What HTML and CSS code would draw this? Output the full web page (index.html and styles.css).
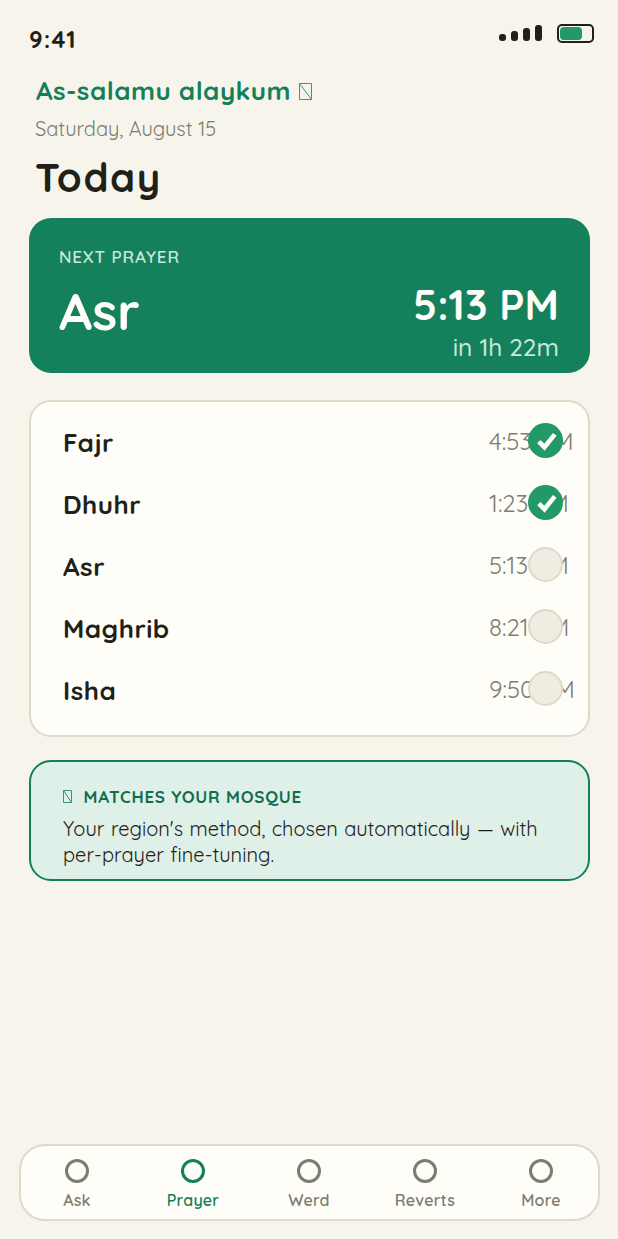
FILE: index.html
```html
<!DOCTYPE html>
<html lang="en">
<head>
    <meta charset="UTF-8">
    <meta name="viewport" content="width=device-width, initial-scale=1.0">
    <title>Today</title>
    <link rel="stylesheet" href="styles.css">
</head>
<body>
    <div class="page">
        <!-- Status bar -->
        <div class="status-bar">
            <span class="clock">9:41</span>
            <div class="status-icons">
                <div class="signal">
                    <span class="bar bar-1"></span>
                    <span class="bar bar-2"></span>
                    <span class="bar bar-3"></span>
                    <span class="bar bar-4"></span>
                </div>
                <div class="battery"><span class="battery-level"></span></div>
            </div>
        </div>

        <!-- Header -->
        <div class="header">
            <div class="greeting">As-salamu alaykum
                <svg class="tofu tofu-lg" viewBox="0 0 13 17"><path d="M.5.5h12v16H.5zM.5.5l12 16" /></svg>
            </div>
            <div class="date">Saturday, August 15</div>
            <h1 class="title">Today</h1>
        </div>

        <!-- Next prayer -->
        <div class="next-card">
            <div class="next-left">
                <div class="next-label">NEXT PRAYER</div>
                <div class="next-name">Asr</div>
            </div>
            <div class="next-right">
                <div class="next-time">5:13 PM</div>
                <div class="next-in">in 1h 22m</div>
            </div>
        </div>

        <!-- Prayer list -->
        <div class="prayer-list">
            <div class="prayer-row">
                <span class="prayer-name">Fajr</span>
                <span class="prayer-time">4:53 AM</span>
                <span class="check done">
                    <svg viewBox="0 0 34 34"><path d="M10.5 18l5.5 5.5 10-12.5" /></svg>
                </span>
            </div>
            <div class="prayer-row">
                <span class="prayer-name">Dhuhr</span>
                <span class="prayer-time">1:23 PM</span>
                <span class="check done">
                    <svg viewBox="0 0 34 34"><path d="M10.5 18l5.5 5.5 10-12.5" /></svg>
                </span>
            </div>
            <div class="prayer-row">
                <span class="prayer-name">Asr</span>
                <span class="prayer-time">5:13 PM</span>
                <span class="check"></span>
            </div>
            <div class="prayer-row">
                <span class="prayer-name">Maghrib</span>
                <span class="prayer-time">8:21 PM</span>
                <span class="check"></span>
            </div>
            <div class="prayer-row">
                <span class="prayer-name">Isha</span>
                <span class="prayer-time">9:50 PM</span>
                <span class="check"></span>
            </div>
        </div>

        <!-- Notice -->
        <div class="notice">
            <div class="notice-title">
                <svg class="tofu" viewBox="0 0 9 13"><path d="M.5.5h8v12h-8zM.5.5l8 12" /></svg>
                MATCHES YOUR MOSQUE
            </div>
            <div class="notice-text">Your region's method, chosen automatically — with per-prayer fine-tuning.</div>
        </div>

        <!-- Tab bar -->
        <div class="tab-bar">
            <div class="tab"><span class="tab-icon"></span>Ask</div>
            <div class="tab active"><span class="tab-icon"></span>Prayer</div>
            <div class="tab"><span class="tab-icon"></span>Werd</div>
            <div class="tab"><span class="tab-icon"></span>Reverts</div>
            <div class="tab"><span class="tab-icon"></span>More</div>
        </div>
    </div>
</body>
</html>
```

FILE: styles.css
```css
/* Page */
body {
    margin: 0;
    background-color: #f7f4ec;
    color: #1f2119;
    font-family: 'Quicksand', 'Lato', sans-serif;
}

.page {
    height: 1239px;
    box-sizing: border-box;
    padding: 0 18px 18px 19px;
    display: flex;
    flex-direction: column;
    overflow: hidden;
}

/* Status bar */
.status-bar {
    display: flex;
    justify-content: space-between;
    padding: 24px 6px 0 10px;
    height: 40px;
}

.clock {
    font-size: 24px;
    font-weight: 700;
    line-height: 30px;
    letter-spacing: 1.2px;
}

.status-icons {
    display: flex;
    align-items: flex-start;
    gap: 15px;
}

.signal {
    display: flex;
    align-items: flex-end;
    gap: 5px;
    height: 16px;
    margin-top: 1px;
}

.bar {
    width: 7px;
    border-radius: 3px;
    background: #1f2119;
}

.bar-1 { height: 7px; }
.bar-2 { height: 10px; }
.bar-3 { height: 13px; }
.bar-4 { height: 16px; }

.battery {
    width: 37px;
    height: 19px;
    border: 2px solid #1f2119;
    border-radius: 5px;
    box-sizing: border-box;
    padding: 1px 0 1px 1px;
}

.battery-level {
    display: block;
    width: 22px;
    height: 13px;
    border-radius: 4px;
    background: #229966;
}

/* Header */
.header {
    padding: 10px 0 0 16px;
}

.greeting {
    padding-left: 1px;
    font-size: 26px;
    font-weight: 700;
    line-height: 33px;
    letter-spacing: 0.45px;
    color: #128059;
}

.tofu {
    fill: none;
    stroke: #128059;
    stroke-width: 1;
    width: 9px;
    height: 13px;
    opacity: 0.8;
}

.tofu-lg {
    width: 13px;
    height: 17px;
}

.date {
    font-size: 20px;
    line-height: 25px;
    margin-top: 9px;
    color: #7b7d70;
}

.title {
    margin: 11px 0 0;
    font-size: 40px;
    font-weight: 700;
    line-height: 50px;
    letter-spacing: 1.6px;
}

/* Next prayer card */
.next-card {
    margin: 16px 10px 0;
    height: 155px;
    box-sizing: border-box;
    padding: 27px 31px 0 30px;
    border-radius: 22px;
    background: #14815c;
    color: #fffdf7;
    display: flex;
    justify-content: space-between;
}

.next-label {
    font-size: 17px;
    font-weight: 600;
    line-height: 24px;
    letter-spacing: 0.85px;
    color: #c9e8da;
}

.next-name {
    font-size: 52px;
    font-weight: 700;
    line-height: 62px;
    margin-top: 11px;
}

.next-right {
    text-align: right;
}

.next-time {
    font-size: 42px;
    font-weight: 700;
    line-height: 50px;
    margin-top: 35px;
}

.next-in {
    font-size: 24.5px;
    font-weight: 500;
    line-height: 28px;
    margin-top: 3px;
    color: #c9e8da;
}

/* Prayer list */
.prayer-list {
    margin: 27px 10px 0;
    height: 337px;
    box-sizing: border-box;
    padding: 9px 25px 0 32px;
    background: #fffdf8;
    border: 2px solid #e0d9c8;
    border-radius: 22px;
}

.prayer-row {
    display: flex;
    align-items: center;
    height: 62px;
}

.prayer-name {
    flex: 1;
    font-size: 26px;
    font-weight: 700;
    letter-spacing: 0.5px;
}

.prayer-time {
    width: 39px;
    margin-bottom: 2px;
    white-space: nowrap;
    font-size: 24px;
    color: #7b7d70;
}

.check {
    position: relative;
    width: 35px;
    height: 35px;
    margin-bottom: 3px;
    box-sizing: border-box;
    border-radius: 50%;
    background: #f1ece2;
    border: 2px solid #e0d9c8;
}

.check.done {
    background: #229966;
    border: none;
}

.check svg {
    display: block;
    width: 35px;
    height: 35px;
    fill: none;
    stroke: #fffdf8;
    stroke-width: 4.5;
}

/* Notice */
.notice {
    margin: 23px 10px 0;
    height: 121px;
    box-sizing: border-box;
    padding: 23px 32px 0;
    background: #dff0e8;
    border: 2px solid #128059;
    border-radius: 22px;
}

.notice-title {
    font-size: 17px;
    font-weight: 700;
    line-height: 24px;
    letter-spacing: 0.75px;
    color: #0f6e4d;
}

.notice-title .tofu {
    margin-right: 6px;
}

.notice-text {
    font-size: 20px;
    font-weight: 400;
    line-height: 26px;
    word-spacing: 1px;
    margin-top: 7px;
}

/* Tab bar */
.tab-bar {
    margin-top: auto;
    height: 77px;
    box-sizing: border-box;
    padding-right: 1px;
    display: flex;
    justify-content: center;
    background: #fffdf8;
    border: 2px solid #e0d9c8;
    border-radius: 26px;
}

.tab {
    flex: 0 0 116px;
    display: flex;
    flex-direction: column;
    align-items: center;
    padding-top: 13px;
    font-size: 16px;
    font-weight: 600;
    line-height: 20px;
    letter-spacing: 0.2px;
    color: #7b7d70;
}

.tab-icon {
    width: 24px;
    height: 24px;
    box-sizing: border-box;
    border: 3px solid #7b7d70;
    border-radius: 50%;
    margin-bottom: 7px;
}

.tab.active {
    color: #128059;
}

.tab.active .tab-icon {
    border-color: #128059;
}
```
